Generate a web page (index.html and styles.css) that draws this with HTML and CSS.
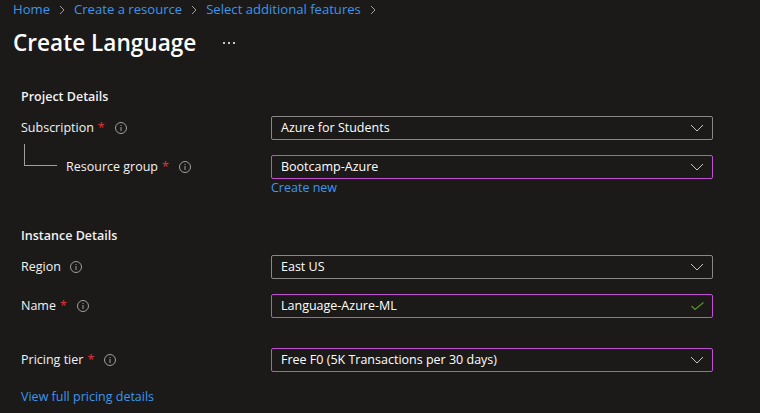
FILE: index.html
```html
<!DOCTYPE html>
<html lang="en">
<head>
<meta charset="utf-8">
<title>Create Language</title>
<link rel="stylesheet" href="styles.css">
</head>
<body>
<div class="page">
  <nav class="crumbs">
    <a class="crumb">Home</a>
    <svg class="sep" viewBox="0 0 6 10" width="6" height="10"><path d="M1 1l4 4-4 4" fill="none" stroke="#a19f9d" stroke-width="1"/></svg>
    <a class="crumb">Create a resource</a>
    <svg class="sep" viewBox="0 0 6 10" width="6" height="10"><path d="M1 1l4 4-4 4" fill="none" stroke="#a19f9d" stroke-width="1"/></svg>
    <a class="crumb">Select additional features</a>
    <svg class="sep" viewBox="0 0 6 10" width="6" height="10"><path d="M1 1l4 4-4 4" fill="none" stroke="#a19f9d" stroke-width="1"/></svg>
  </nav>
  <header class="title-row">
    <h1 class="title">Create Language</h1>
    <span class="more"><i></i><i></i><i></i></span>
  </header>

  <section class="form">
    <h2 class="section-title first">Project Details</h2>

    <div class="row">
      <div class="label">Subscription<span class="req">*</span><svg class="info" viewBox="0 0 12 12" width="12" height="12"><circle cx="6" cy="6" r="5.5" fill="none" stroke="#a19f9d"/><rect x="5.5" y="5" width="1" height="4" fill="#a19f9d"/><rect x="5.5" y="3" width="1" height="1" fill="#a19f9d"/></svg></div>
      <div class="control"><div class="box">Azure for Students<svg class="chev" viewBox="0 0 14 8" width="14" height="8"><path d="M1 1l6 6 6-6" fill="none" stroke="#c8c6c4" stroke-width="1"/></svg></div></div>
    </div>

    <div class="row rg">
      <div class="label sub"><span class="tree"></span>Resource group<span class="req">*</span><svg class="info" viewBox="0 0 12 12" width="12" height="12"><circle cx="6" cy="6" r="5.5" fill="none" stroke="#a19f9d"/><rect x="5.5" y="5" width="1" height="4" fill="#a19f9d"/><rect x="5.5" y="3" width="1" height="1" fill="#a19f9d"/></svg></div>
      <div class="control"><div class="box dirty">Bootcamp-Azure<svg class="chev" viewBox="0 0 14 8" width="14" height="8"><path d="M1 1l6 6 6-6" fill="none" stroke="#c8c6c4" stroke-width="1"/></svg></div></div>
    </div>
    <div class="row after">
      <div class="label"></div>
      <div class="control"><a class="link">Create new</a></div>
    </div>

    <h2 class="section-title second">Instance Details</h2>

    <div class="row">
      <div class="label">Region<svg class="info plain" viewBox="0 0 12 12" width="12" height="12"><circle cx="6" cy="6" r="5.5" fill="none" stroke="#a19f9d"/><rect x="5.5" y="5" width="1" height="4" fill="#a19f9d"/><rect x="5.5" y="3" width="1" height="1" fill="#a19f9d"/></svg></div>
      <div class="control"><div class="box">East US<svg class="chev" viewBox="0 0 14 8" width="14" height="8"><path d="M1 1l6 6 6-6" fill="none" stroke="#c8c6c4" stroke-width="1"/></svg></div></div>
    </div>

    <div class="row name">
      <div class="label">Name<span class="req">*</span><svg class="info" viewBox="0 0 12 12" width="12" height="12"><circle cx="6" cy="6" r="5.5" fill="none" stroke="#a19f9d"/><rect x="5.5" y="5" width="1" height="4" fill="#a19f9d"/><rect x="5.5" y="3" width="1" height="1" fill="#a19f9d"/></svg></div>
      <div class="control"><div class="box dirty">Language-Azure-ML<svg class="check" viewBox="0 0 13 8" width="13" height="8"><path d="M0.5 4l3.5 3.5 8.5-7" fill="none" stroke="#5b8f32" stroke-width="1.2"/></svg></div></div>
    </div>

    <div class="row tier">
      <div class="label">Pricing tier<span class="req">*</span><svg class="info" viewBox="0 0 12 12" width="12" height="12"><circle cx="6" cy="6" r="5.5" fill="none" stroke="#a19f9d"/><rect x="5.5" y="5" width="1" height="4" fill="#a19f9d"/><rect x="5.5" y="3" width="1" height="1" fill="#a19f9d"/></svg></div>
      <div class="control"><div class="box dirty">Free F0 (5K Transactions per 30 days)<svg class="chev" viewBox="0 0 14 8" width="14" height="8"><path d="M1 1l6 6 6-6" fill="none" stroke="#c8c6c4" stroke-width="1"/></svg></div></div>
    </div>

    <a class="link pricing">View full pricing details</a>
  </section>
</div>
</body>
</html>
```
FILE: styles.css
```css
html, body {
  margin: 0;
  padding: 0;
  background: #1b1a19;
  height: 100%;
  overflow: hidden;
}
body {
  font-family: "Open Sans", "Noto Sans", "Liberation Sans", sans-serif;
  color: #f3f2f1;
  font-size: 12.5px;
}
.page {
  padding: 0 0 0 13px;
}
.crumbs {
  display: flex;
  align-items: center;
  height: 19px;
  font-size: 13.1px;
  line-height: 19px;
}
.crumb {
  color: #3a96ee;
}
.sep {
  margin: 0 9px;
  display: block;
}
.title-row {
  display: flex;
  align-items: center;
  height: 32px;
  margin-top: 8px;
}
.title {
  margin: 0;
  font-size: 22.6px;
  font-weight: 600;
  line-height: 32px;
  color: #ffffff;
}
.more {
  display: flex;
  gap: 3px;
  margin-left: 27px;
  margin-top: 0;
}
.more i {
  display: block;
  width: 2px;
  height: 2px;
  background: #c8c6c4;
}
.form {
  padding-left: 8px;
  width: 692px;
}
.section-title {
  margin: 0;
  font-size: 12.5px;
  font-weight: 600;
  line-height: 20px;
  color: #f3f2f1;
}
.section-title.first {
  margin-top: 28px;
}
.section-title.second {
  margin-top: 30px;
}
.row {
  display: flex;
  align-items: center;
  margin-top: 15px;
}
.section-title + .row {
  margin-top: 9px;
}
.row.after {
  margin-top: 0;
}
.row.tier {
  margin-top: 30px;
}
.label {
  width: 250px;
  display: flex;
  align-items: center;
  line-height: 20px;
  flex: none;
}
.label.sub {
  padding-left: 3px;
  width: 247px;
}
.tree {
  display: block;
  width: 33px;
  height: 22px;
  border-left: 1px solid #a19f9d;
  border-bottom: 1px solid #a19f9d;
  box-sizing: border-box;
  align-self: flex-start;
  margin-top: -13px;
  margin-right: 9px;
}
.req {
  color: #e0343c;
  margin-left: 4px;
}
.info {
  display: block;
  margin-left: 10px;
}
.info.plain {
  margin-left: 9px;
}
.control {
  width: 442px;
}
.box {
  box-sizing: border-box;
  height: 24px;
  border: 1px solid #8a8886;
  border-radius: 2px;
  padding: 0 8px 0 9px;
  display: flex;
  align-items: center;
  justify-content: space-between;
  line-height: 20px;
  color: #ffffff;
}
.box.dirty {
  border-color: #c24fd3;
}
.chev, .check {
  display: block;
}
.link {
  color: #3a96ee;
  line-height: 16px;
  display: block;
}
.row.after .link {
  line-height: 17px;
}
.pricing {
  margin-top: 17px;
  line-height: 16px;
}
```
